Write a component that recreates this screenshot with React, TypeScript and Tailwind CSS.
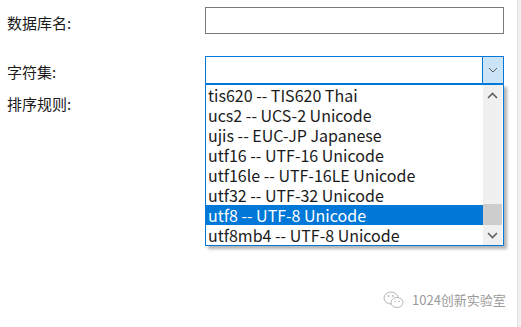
import React from "react"

const options = [
  "tis620 -- TIS620 Thai",
  "ucs2 -- UCS-2 Unicode",
  "ujis -- EUC-JP Japanese",
  "utf16 -- UTF-16 Unicode",
  "utf16le -- UTF-16LE Unicode",
  "utf32 -- UTF-32 Unicode",
  "utf8 -- UTF-8 Unicode",
  "utf8mb4 -- UTF-8 Unicode",
]

const font = { fontFamily: '"Microsoft YaHei", "Noto Sans CJK SC", sans-serif' }

function Chevron({ up = false }: { up?: boolean }) {
  return (
    <svg width="11" height="7" viewBox="0 0 11 7" className={up ? "" : "rotate-180"}>
      <path d="M1 6 L5.5 1.5 L10 6" fill="none" stroke="#606060" strokeWidth="1.6" />
    </svg>
  )
}

export default function App() {
  return (
    <div className="relative w-[521px] h-[327px] bg-white overflow-hidden text-[#1a1a1a]" style={font}>
      {/* right page edge */}
      <div className="absolute right-0 top-0 h-full w-[4px] bg-[#f0f0f0] border-l border-[#e3e3e3]" />

      <div className="flex items-center h-[27px] mt-[7px]">
        <span className="w-[205px] pl-[7px] text-[15px] leading-none pt-[3px]">数据库名:</span>
        <div className="w-[299px] h-[27px] border border-[#7a7a7a]" />
      </div>

      <div className="flex items-center h-[28px] mt-[22px]">
        <span className="w-[205px] pl-[7px] text-[15px] leading-none pt-[3px]">字符集:</span>
        <div className="w-[299px] h-[28px] border border-[#0078d7] flex justify-end">
          <div className="w-[21px] h-full bg-[#cce4f7] border-l border-[#0078d7] flex items-center justify-center">
            <svg width="10" height="6" viewBox="0 0 10 6">
              <path d="M1 1 L5 5 L9 1" fill="none" stroke="#5a5a5a" strokeWidth="1" />
            </svg>
          </div>
        </div>
      </div>

      <div className="flex">
        <span className="w-[205px] pl-[7px] text-[15px] leading-none pt-[12px]">排序规则:</span>
        <div className="relative w-[299px] h-[162px] border border-[#0078d7] bg-white flex shadow-[3px_3px_3px_rgba(0,0,0,0.3)]">
          <div className="flex-1 flex flex-col">
            {options.map((o) => (
              <div
                key={o}
                className={
                  "h-[20px] flex items-center pl-[2px] text-[16px] leading-none whitespace-nowrap " +
                  (o.startsWith("utf8 ") ? "bg-[#0078d7] text-white" : "")
                }
              >
                {o}
              </div>
            ))}
          </div>
          <div className="w-[19px] mr-[1px] bg-[#f0f0f0] flex flex-col items-center">
            <div className="h-[20px] flex items-center justify-center">
              <Chevron up />
            </div>
            <div className="flex-1" />
            <div className="w-full h-[21px] bg-[#cdcdcd]" />
            <div className="h-[20px] flex items-center justify-center">
              <Chevron />
            </div>
          </div>
        </div>
      </div>

      <div className="absolute left-[383px] top-[290px] flex items-center gap-[7px] text-[#9a9a9a]">
        <svg width="22" height="20" viewBox="0 0 22 20">
          <ellipse cx="8" cy="8" rx="7" ry="6" fill="none" stroke="#b5b5b5" strokeWidth="1" />
          <ellipse cx="14" cy="12.5" rx="6" ry="5" fill="white" stroke="#b5b5b5" strokeWidth="1" />
          <circle cx="5.5" cy="6" r="0.9" fill="#b5b5b5" />
          <circle cx="10" cy="6" r="0.9" fill="#b5b5b5" />
          <circle cx="12" cy="11.5" r="0.8" fill="#b5b5b5" />
          <circle cx="16" cy="11.5" r="0.8" fill="#b5b5b5" />
        </svg>
        <span className="text-[13px]">1024创新实验室</span>
      </div>
    </div>
  )
}
